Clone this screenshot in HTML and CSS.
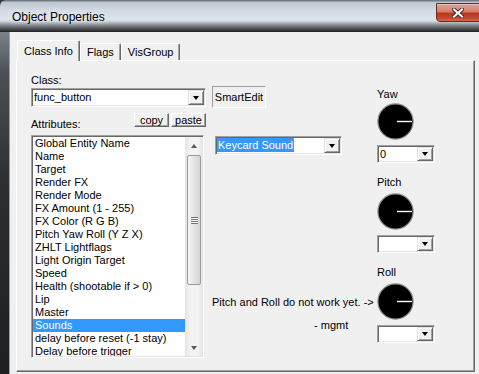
FILE: index.html
```html
<!DOCTYPE html>
<html lang="en">

<head>
    <meta charset="UTF-8">
    <meta name="viewport" content="width=device-width, initial-scale=1.0">
    <title>Object Properties</title>
    <link rel="stylesheet" href="styles.css">
</head>

<body>
    <div class="window">
        <header class="titlebar">
            <span class="title">Object Properties</span>
            <div class="close">
                <svg width="12" height="10" viewBox="0 0 12 10">
                    <path d="M2 1.5 L10 8.5 M10 1.5 L2 8.5" stroke="#4a2a2a" stroke-width="4" stroke-linecap="square" />
                    <path d="M2 1.5 L10 8.5 M10 1.5 L2 8.5" stroke="#fff" stroke-width="2" stroke-linecap="square" />
                </svg>
            </div>
        </header>

        <div class="frame-body">
            <div class="frame"></div>
            <div class="client">
                <div class="tabs">
                    <div class="tab active">Class Info</div>
                    <div class="tab">Flags</div>
                    <div class="tab">VisGroup</div>
                </div>

                <div class="panel">
                    <div class="col-class">
                        <div class="label">Class:</div>
                        <div class="combo class-combo"><span class="val">func_button</span><span class="drop"></span></div>
                        <div class="attr-row">
                            <div class="label">Attributes:</div>
                            <button class="btn small">copy</button>
                            <button class="btn small">paste</button>
                        </div>
                        <div class="list">
                            <ul class="items">
                                <li>Global Entity Name</li>
                                <li>Name</li>
                                <li>Target</li>
                                <li>Render FX</li>
                                <li>Render Mode</li>
                                <li>FX Amount (1 - 255)</li>
                                <li>FX Color (R G B)</li>
                                <li>Pitch Yaw Roll (Y Z X)</li>
                                <li>ZHLT Lightflags</li>
                                <li>Light Origin Target</li>
                                <li>Speed</li>
                                <li>Health (shootable if &gt; 0)</li>
                                <li>Lip</li>
                                <li>Master</li>
                                <li class="sel">Sounds</li>
                                <li>delay before reset (-1 stay)</li>
                                <li>Delay before trigger</li>
                            </ul>
                            <div class="scrollbar">
                                <span class="sb-btn up"></span>
                                <span class="thumb"><span class="grip"></span></span>
                                <span class="sb-fill"></span>
                                <span class="sb-btn down"></span>
                            </div>
                        </div>
                    </div>

                    <div class="col-mid">
                        <button class="btn smartedit">SmartEdit</button>
                        <div class="combo value-combo"><span class="val"><span class="sel">Keycard Sound</span></span><span class="drop"></span></div>
                        <p class="note">Pitch and Roll do not work yet. -&gt;</p>
                        <p class="sig">- mgmt</p>
                    </div>

                    <div class="col-angles">
                        <div class="angle">
                            <div class="label">Yaw</div>
                            <svg class="dial" width="37" height="37" viewBox="0 0 37 37">
                                <circle cx="18.5" cy="18.5" r="17.6" fill="#000" stroke="#8c8c8c" stroke-width="1.2" />
                                <line x1="20" y1="18.5" x2="35" y2="18.5" stroke="#fff" stroke-width="1.4" />
                            </svg>
                            <div class="combo angle-combo"><span class="val">0</span><span class="drop"></span></div>
                        </div>
                        <div class="angle">
                            <div class="label">Pitch</div>
                            <svg class="dial" width="37" height="37" viewBox="0 0 37 37">
                                <circle cx="18.5" cy="18.5" r="17.6" fill="#000" stroke="#8c8c8c" stroke-width="1.2" />
                                <line x1="20" y1="18.5" x2="35" y2="18.5" stroke="#fff" stroke-width="1.4" />
                            </svg>
                            <div class="combo angle-combo"><span class="val"></span><span class="drop"></span></div>
                        </div>
                        <div class="angle">
                            <div class="label">Roll</div>
                            <svg class="dial" width="37" height="37" viewBox="0 0 37 37">
                                <circle cx="18.5" cy="18.5" r="17.6" fill="#000" stroke="#8c8c8c" stroke-width="1.2" />
                                <line x1="20" y1="18.5" x2="35" y2="18.5" stroke="#fff" stroke-width="1.4" />
                            </svg>
                            <div class="combo angle-combo"><span class="val"></span><span class="drop"></span></div>
                        </div>
                    </div>
                </div>
            </div>
        </div>
    </div>
</body>

</html>
```

FILE: styles.css
```css
html,
body {
    margin: 0;
    width: 479px;
    height: 374px;
    overflow: hidden;
    background: #34383c;
}

.window {
    width: 479px;
    height: 374px;
    display: flex;
    flex-direction: column;
    font-family: "Liberation Sans", Arial, sans-serif;
    font-size: 11px;
    line-height: 13px;
    color: #000;
}

/* title bar */
.titlebar {
    flex: 0 0 31px;
    display: flex;
    align-items: flex-start;
    border-bottom: 1px solid #262626;
    border-radius: 6px 0 0 0;
    background:
        linear-gradient(to bottom, rgba(40, 40, 40, 0) 68%, rgba(40, 40, 40, 0.55) 85%, rgba(30, 30, 30, 0.9) 100%),
        linear-gradient(to bottom, #737b83 0, #737b83 1px, #bcc6d0 2px, #d3dbe4 35%, #dce3eb 60%, #c9d1d9 78%);
}

.title {
    margin: 10px 0 0 12px;
    font-size: 12px;
    line-height: 14px;
    text-shadow: 0 0 6px rgba(255, 255, 255, 0.9);
}

.close {
    margin: 3px -5px 0 auto;
    width: 48px;
    height: 19px;
    padding-right: 4px;
    box-sizing: border-box;
    display: flex;
    align-items: center;
    justify-content: center;
    border: 1px solid #6a2a22;
    border-radius: 0 0 0 4px;
    box-shadow: inset 0 1px rgba(255, 255, 255, 0.35);
    background: linear-gradient(to bottom, #e2a293 0, #d47e6c 45%, #b9371f 55%, #c44d33 85%, #d26a4e 100%);
}

/* frame + client */
.frame-body {
    flex: 1;
    display: flex;
    min-height: 0;
}

.frame {
    width: 9px;
    background: linear-gradient(to bottom, #7b838a 0, #4b5055 12%, #2c2e30 45%, #1e1f20 100%);
}

.client {
    flex: 1;
    border-left: 1px solid #9aa1a8;
    background: #f0f0f0;
    padding: 8px 4px 0 6px;
}

/* tabs */
.tabs {
    display: flex;
    align-items: flex-end;
    height: 20px;
    margin-left: 1px;
}

.tab {
    height: 17px;
    box-sizing: border-box;
    padding: 2px 6px 0;
    border: 1px solid;
    border-color: #fff #696969 transparent #fff;
    border-bottom: none;
    border-radius: 2px 2px 0 0;
    box-shadow: inset -1px 0 #a0a0a0;
    background: #f0f0f0;
    white-space: nowrap;
}

.tab.active {
    height: 21px;
    padding-top: 4px;
    margin-bottom: -1px;
    position: relative;
    z-index: 1;
}

.panel {
    height: 312px;
    box-sizing: border-box;
    border: 1px solid;
    border-color: #fff #696969 #696969 #fff;
    box-shadow: inset -1px -1px #a0a0a0;
    padding-left: 14px;
    display: grid;
    grid-template-columns: 175px 159px 58px;
    column-gap: 6px;
    align-items: start;
}

.label {
    height: 13px;
    white-space: nowrap;
}

/* controls */
.btn {
    font: inherit;
    color: #000;
    margin: 0;
    padding: 0;
    box-sizing: border-box;
    border: 1px solid;
    border-color: #fff #696969 #696969 #fff;
    box-shadow: inset -1px -1px #a0a0a0;
    background: #f0f0f0;
}

.btn.small {
    width: 35px;
    height: 14px;
    line-height: 12px;
}

.combo {
    display: flex;
    box-sizing: border-box;
    height: 19px;
    padding: 1px;
    border: 1px solid;
    border-color: #a0a0a0 #fff #fff #a0a0a0;
    box-shadow: inset 1px 1px #696969, inset -1px -1px #e3e3e3;
    background: #fff;
}

.combo .val {
    flex: 1;
    padding-left: 1px;
    line-height: 15px;
    white-space: nowrap;
    overflow: hidden;
}

.combo .drop {
    width: 16px;
    box-sizing: border-box;
    border: 1px solid;
    border-color: #e3e3e3 #696969 #696969 #e3e3e3;
    box-shadow: inset 1px 1px #fff, inset -1px -1px #a0a0a0;
    background: #f0f0f0;
    display: flex;
    align-items: center;
    justify-content: center;
}

.combo .drop::after {
    content: "";
    border-top: 4px solid #000;
    border-left: 3.5px solid transparent;
    border-right: 3.5px solid transparent;
}

/* class column */
.col-class {
    padding-top: 13px;
}

.class-combo {
    margin-top: 1px;
}

.attr-row {
    display: flex;
    gap: 2px;
    height: 22px;
    margin-top: 6px;
}

.attr-row .label {
    flex: 1;
    margin-top: 5px;
}

.list {
    width: 173px;
    height: 223px;
    box-sizing: border-box;
    display: flex;
    padding: 1px;
    border: 1px solid;
    border-color: #a0a0a0 #fff #fff #a0a0a0;
    box-shadow: inset 1px 1px #696969, inset -1px -1px #e3e3e3;
    background: #fff;
}

.items {
    flex: 1;
    margin: 0;
    padding: 0;
    list-style: none;
    overflow: hidden;
}

.items li {
    height: 13px;
    padding-left: 2px;
    white-space: nowrap;
}

.items li.sel {
    background: #3399ff;
    color: #fff;
}

.scrollbar {
    width: 17px;
    display: flex;
    flex-direction: column;
    background: linear-gradient(to right, #e4e4e4, #f3f3f3 30%, #f3f3f3 70%, #e9e9e9);
}

.sb-btn {
    height: 17px;
    display: flex;
    align-items: center;
    justify-content: center;
}

.sb-btn::after {
    content: "";
    border-left: 3.5px solid transparent;
    border-right: 3.5px solid transparent;
}

.sb-btn.up::after {
    border-bottom: 4px solid #5a5a5a;
}

.sb-btn.down::after {
    border-top: 4px solid #5a5a5a;
}

.thumb {
    height: 130px;
    margin: 1px 1px 0 2px;
    box-sizing: border-box;
    border: 1px solid #9c9c9c;
    border-radius: 2px;
    background: linear-gradient(to right, #f5f5f5, #e6e6e6 45%, #d4d4d4);
    display: flex;
    align-items: center;
    justify-content: center;
}

.grip {
    width: 7px;
    height: 7px;
    background: repeating-linear-gradient(#707070 0 1px, #fafafa 1px 2px);
}

.sb-fill {
    flex: 1;
}

/* middle column */
.col-mid {
    padding-top: 25px;
}

.smartedit {
    display: block;
    width: 54px;
    height: 22px;
    border-color: #a0a0a0 #fff #fff #a0a0a0;
    box-shadow: none;
}

.value-combo {
    width: 127px;
    margin: 28px 0 0 3px;
}

.value-combo .val {
    padding-left: 0;
}

.value-combo .sel {
    display: inline-block;
    padding: 0 1px;
    line-height: 14px;
    background: #3399ff;
    color: #fff;
}

.note {
    margin: 141px 0 0;
    text-align: right;
    white-space: nowrap;
}

.sig {
    margin: 10px 0 0;
    padding-left: 102px;
}

/* angles column */
.col-angles {
    padding-top: 27px;
    display: flex;
    flex-direction: column;
    gap: 13px;
}

.angle {
    display: flex;
    flex-direction: column;
}

.dial {
    display: block;
    margin-top: 4px;
}

.angle:first-child .dial {
    margin-top: 2px;
}

.angle-combo {
    height: 18px;
    margin-top: 5px;
}

.angle-combo .val {
    line-height: 14px;
}
```
